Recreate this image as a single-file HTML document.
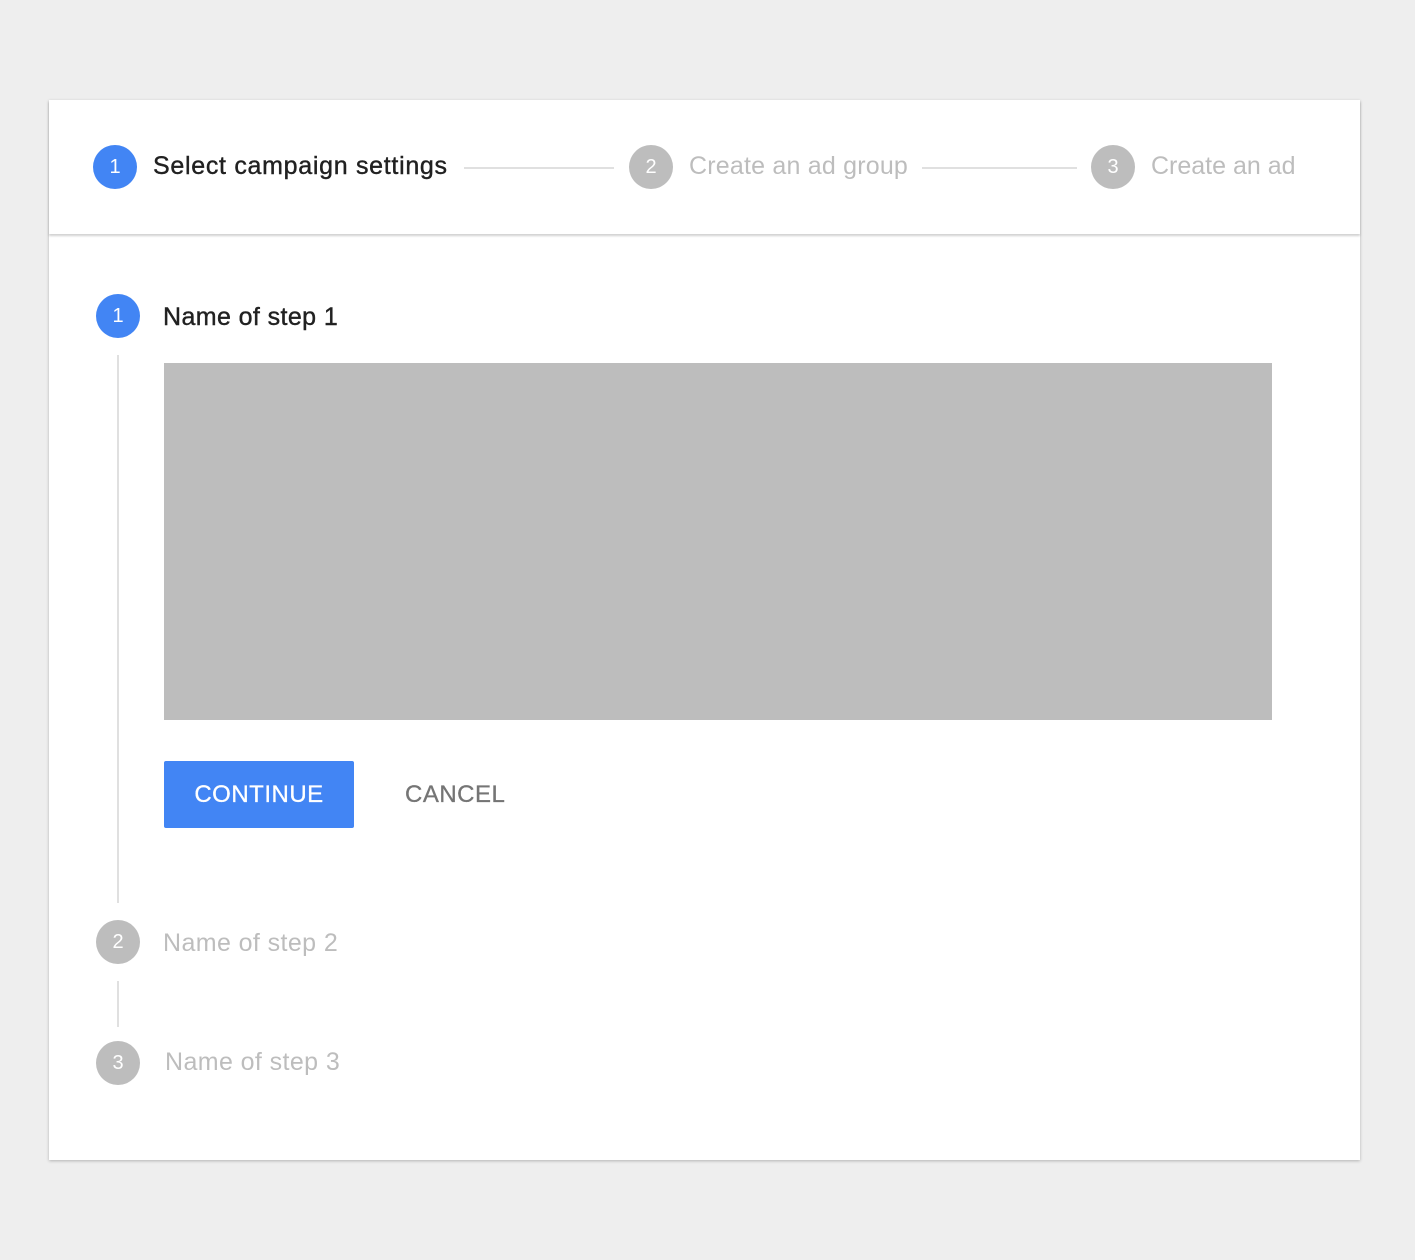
<!DOCTYPE html>
<html><head><meta charset="utf-8"><style>
*{margin:0;padding:0;box-sizing:border-box}
body{width:1415px;height:1260px;background:#eeeeee;position:relative;font-family:"Liberation Sans",sans-serif;overflow:hidden}
.card{position:absolute;left:49px;top:100px;width:1311px;height:1060px;background:#fff;box-shadow:0 1px 3px rgba(0,0,0,.25)}
.hdr{position:absolute;left:49px;top:100px;width:1311px;height:134px;background:#fff;box-shadow:0 2px 2px rgba(0,0,0,.18)}
.c{position:absolute;width:44px;height:44px;border-radius:50%;color:#fff;font-size:20px;line-height:44px;text-align:center}
.b{background:#4285f4}.g{background:#bdbdbd}
.t{position:absolute;font-size:25px;white-space:nowrap;line-height:30px}
.dk{color:#212121;-webkit-text-stroke:0.4px #212121}.lt{color:#bdbdbd}
.ln{position:absolute;height:2px;background:#e0e0e0}
.vl{position:absolute;width:2px;background:#e0e0e0}
</style></head><body>
<div class="card"></div>
<div class="hdr"></div>
<div class="c b" style="left:93px;top:145px">1</div>
<div class="t dk" style="left:153px;top:151px;letter-spacing:0.7px">Select campaign settings</div>
<div class="ln" style="left:464px;top:167px;width:150px"></div>
<div class="c g" style="left:629px;top:145px">2</div>
<div class="t lt" style="left:689px;top:151px;letter-spacing:0.2px">Create an ad group</div>
<div class="ln" style="left:922px;top:167px;width:155px"></div>
<div class="c g" style="left:1091px;top:145px">3</div>
<div class="t lt" style="left:1151px;top:151px">Create an ad</div>

<div class="c b" style="left:96px;top:294px">1</div>
<div class="t dk" style="left:163px;top:302px;letter-spacing:0.4px">Name of step 1</div>
<div class="vl" style="left:117px;top:355px;height:548px"></div>
<div style="position:absolute;left:164px;top:363px;width:1108px;height:357px;background:#bdbdbd"></div>
<div style="position:absolute;left:164px;top:761px;width:190px;height:67px;background:#4285f4;border-radius:2px;color:#fff;font-size:24px;line-height:67px;text-align:center;letter-spacing:0.5px;-webkit-text-stroke:0.3px #fff">CONTINUE</div>
<div class="t" style="left:405px;top:780px;font-size:24px;color:#757575;letter-spacing:0.5px;-webkit-text-stroke:0.3px #757575">CANCEL</div>

<div class="c g" style="left:96px;top:920px">2</div>
<div class="t lt" style="left:163px;top:928px;letter-spacing:0.4px">Name of step 2</div>
<div class="vl" style="left:117px;top:981px;height:46px"></div>
<div class="c g" style="left:96px;top:1041px">3</div>
<div class="t lt" style="left:165px;top:1047px;letter-spacing:0.4px">Name of step 3</div>
</body></html>
